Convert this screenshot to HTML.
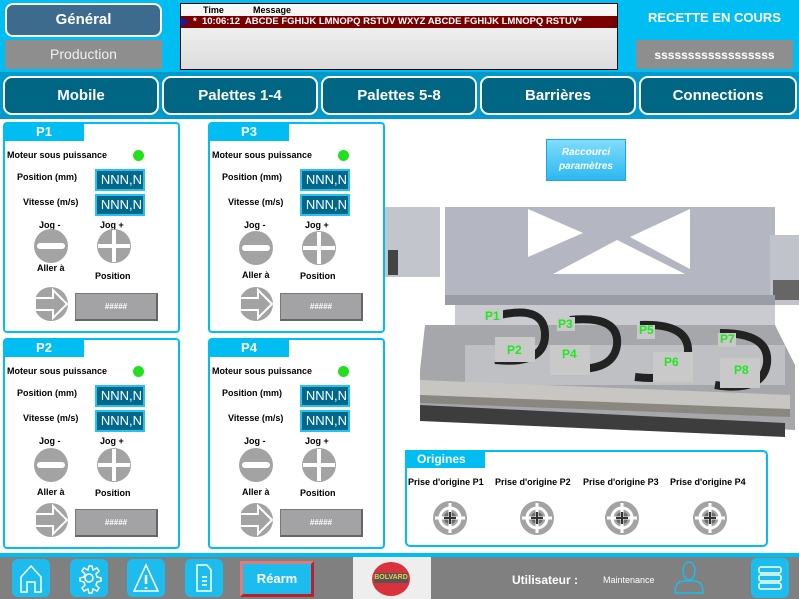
<!DOCTYPE html>
<html><head><meta charset="utf-8"><style>
*{margin:0;padding:0;box-sizing:border-box}
body{width:799px;height:599px;overflow:hidden;background:#fff;font-family:"Liberation Sans",Arial,sans-serif;position:relative}
.a{position:absolute}
.hdr{left:0;top:0;width:799px;height:72px;background:#00bdf2}
.nav{left:0;top:72px;width:799px;height:47px;background:#0099cc}
.nb{position:absolute;top:76px;height:39px;background:#006684;border:2px solid #fff;border-radius:9px;color:#fff;font-weight:bold;font-size:15px;text-align:center;line-height:35px}
.pan{position:absolute;width:177px;height:211px;border:2px solid #00bdf2;border-radius:4px;background:#fff}
.tab{position:absolute;left:-1px;top:-1px;width:80px;height:18px;background:#00bdf2;color:#fff;font-weight:bold;font-size:13px;text-align:center;line-height:18px}
.t{position:absolute;font-weight:bold;font-size:9px;color:#000;white-space:nowrap}
.f{position:absolute;left:90px;width:50px;height:22px;background:#00688b;border:2px solid #27c0ef;color:#fff;font-size:13px;text-align:right;padding-right:1px;line-height:18px}
.dot{position:absolute;left:128px;top:26px;width:11px;height:11px;border-radius:50%;background:#22e01e}
.btn{position:absolute;left:70px;top:169px;width:83px;height:28px;background:#a3a3a6;border:1px solid #777;border-right:2px solid #666;border-bottom:2px solid #666;color:#fff;font-size:8px;text-align:center;line-height:25px;font-weight:bold}
.ib{position:absolute;top:559px;width:38px;height:38px;background:#1cbcee;border-radius:6px}
</style></head><body>
<div class="a hdr"></div>
<div class="a" style="left:5px;top:3px;width:157px;height:34px;background:#3d6b8e;border:2px solid #fff;border-radius:8px;color:#fff;font-weight:bold;font-size:15px;text-align:center;line-height:30px">Général</div>
<div class="a" style="left:5px;top:40px;width:157px;height:29px;background:#8e8e8e;color:#f0f0f0;font-size:14px;text-align:center;line-height:29px">Production</div>
<div class="a" style="left:180px;top:3px;width:438px;height:67px;border:1px solid #000;background:linear-gradient(#fafafa,#dcdcdc)"></div>
<div class="a" style="left:203px;top:5px;font-size:9px;font-weight:bold">Time</div>
<div class="a" style="left:253px;top:5px;font-size:9px;font-weight:bold">Message</div>
<div class="a" style="left:181px;top:16px;width:436px;height:12px;background:#7a0000"></div>
<div class="a" style="left:181px;top:17px;width:0;height:0;border-top:5px solid transparent;border-bottom:5px solid transparent;border-left:8px solid #1a1aa0"></div>
<div class="a" style="left:193px;top:16px;color:#fff;font-size:9.5px;font-weight:bold;line-height:12px;white-space:nowrap">*&nbsp; 10:06:12&nbsp; ABCDE FGHIJK LMNOPQ RSTUV WXYZ ABCDE FGHIJK LMNOPQ RSTUV*</div>
<div class="a" style="left:636px;top:10px;width:157px;text-align:center;color:#fff;font-weight:bold;font-size:13px">RECETTE EN COURS</div>
<div class="a" style="left:636px;top:40px;width:157px;height:29px;background:#8e8e8e;color:#fff;font-weight:bold;font-size:12px;text-align:center;line-height:31px">ssssssssssssssssss</div>
<div class="a nav"></div>
<div class="nb" style="left:3px;width:156px">Mobile</div>
<div class="nb" style="left:162px;width:156px">Palettes 1-4</div>
<div class="nb" style="left:321px;width:156px">Palettes 5-8</div>
<div class="nb" style="left:480px;width:156px">Barrières</div>
<div class="nb" style="left:639px;width:158px">Connections</div>

<svg width="0" height="0" style="position:absolute"><defs>
<g id="minus"><circle r="17" fill="#a3a3a3"/><rect x="-14" y="-3" width="28" height="6" rx="3" fill="#fff"/></g>
<g id="plus"><circle r="17" fill="#a3a3a3"/><rect x="-16" y="-2" width="32" height="4" fill="#fff"/><rect x="-2" y="-16" width="4" height="32" fill="#fff"/></g>
<g id="arr"><circle r="17" fill="#a3a3a3"/><path d="M-16,-6 H2 V-14 L16,0 L2,14 V6 H-16 Z" fill="#a3a3a3" stroke="#fff" stroke-width="2"/></g>
<g id="tgt"><circle r="17" fill="#a3a3a3"/><circle r="10" fill="none" stroke="#fff" stroke-width="3"/><circle r="6" fill="#6a6a6a"/><rect x="-15" y="-1.5" width="30" height="3" fill="#fff"/><rect x="-1.5" y="-15" width="3" height="30" fill="#fff"/><rect x="-6" y="-1" width="12" height="2" fill="#333"/><rect x="-1" y="-6" width="2" height="12" fill="#333"/></g>
</defs></svg>

<div class="pan" style="left:3px;top:122px">
<div class="tab">P1</div>
<div class="t" style="left:2px;top:26px">Moteur sous puissance</div><div class="dot"></div>
<div class="t" style="left:12px;top:48px">Position (mm)</div><div class="f" style="top:45px">NNN,N</div>
<div class="t" style="left:18px;top:73px">Vitesse (m/s)</div><div class="f" style="top:70px">NNN,N</div>
<div class="t" style="left:34px;top:96px">Jog -</div><div class="t" style="left:95px;top:96px">Jog +</div>
<div class="t" style="left:32px;top:139px">Aller à</div><div class="t" style="left:90px;top:147px">Position</div>
<svg class="a" style="left:0;top:0" width="175" height="209"><use href="#minus" x="46" y="122"/><use href="#plus" x="109" y="122"/><use href="#arr" x="46" y="180"/></svg>
<div class="btn">#####</div>
</div>
<div class="pan" style="left:3px;top:338px">
<div class="tab">P2</div>
<div class="t" style="left:2px;top:26px">Moteur sous puissance</div><div class="dot"></div>
<div class="t" style="left:12px;top:48px">Position (mm)</div><div class="f" style="top:45px">NNN,N</div>
<div class="t" style="left:18px;top:73px">Vitesse (m/s)</div><div class="f" style="top:70px">NNN,N</div>
<div class="t" style="left:34px;top:96px">Jog -</div><div class="t" style="left:95px;top:96px">Jog +</div>
<div class="t" style="left:32px;top:147px">Aller à</div><div class="t" style="left:90px;top:148px">Position</div>
<svg class="a" style="left:0;top:0" width="175" height="209"><use href="#minus" x="46" y="125"/><use href="#plus" x="109" y="125"/><use href="#arr" x="46" y="180"/></svg>
<div class="btn">#####</div>
</div>
<div class="pan" style="left:208px;top:122px">
<div class="tab">P3</div>
<div class="t" style="left:2px;top:26px">Moteur sous puissance</div><div class="dot"></div>
<div class="t" style="left:12px;top:48px">Position (mm)</div><div class="f" style="top:45px">NNN,N</div>
<div class="t" style="left:18px;top:73px">Vitesse (m/s)</div><div class="f" style="top:70px">NNN,N</div>
<div class="t" style="left:34px;top:96px">Jog -</div><div class="t" style="left:95px;top:96px">Jog +</div>
<div class="t" style="left:32px;top:146px">Aller à</div><div class="t" style="left:90px;top:147px">Position</div>
<svg class="a" style="left:0;top:0" width="175" height="209"><use href="#minus" x="46" y="124"/><use href="#plus" x="109" y="124"/><use href="#arr" x="46" y="180"/></svg>
<div class="btn">#####</div>
</div>
<div class="pan" style="left:208px;top:338px">
<div class="tab">P4</div>
<div class="t" style="left:2px;top:26px">Moteur sous puissance</div><div class="dot"></div>
<div class="t" style="left:12px;top:48px">Position (mm)</div><div class="f" style="top:45px">NNN,N</div>
<div class="t" style="left:18px;top:73px">Vitesse (m/s)</div><div class="f" style="top:70px">NNN,N</div>
<div class="t" style="left:34px;top:96px">Jog -</div><div class="t" style="left:95px;top:96px">Jog +</div>
<div class="t" style="left:32px;top:147px">Aller à</div><div class="t" style="left:90px;top:148px">Position</div>
<svg class="a" style="left:0;top:0" width="175" height="209"><use href="#minus" x="46" y="125"/><use href="#plus" x="109" y="125"/><use href="#arr" x="46" y="180"/></svg>
<div class="btn">#####</div>
</div>

<div class="a" style="left:546px;top:139px;width:80px;height:42px;background:linear-gradient(#7fdcfb,#2cb8ef);border:1px solid #1ba8e0;color:#fff;font-style:italic;font-weight:bold;font-size:10px;text-align:center;line-height:14px;padding-top:6px">Raccourci<br>paramètres</div>

<!-- machine -->
<svg class="a" style="left:385px;top:195px" width="414" height="255">
<rect x="0" y="12" width="55" height="70" fill="#c3c5cc"/><rect x="3" y="55" width="10" height="25" fill="#444"/>
<rect x="60" y="12" width="330" height="98" fill="#b4b7c1"/>
<path d="M143,14 L143,62 L198,38 Z" fill="#fff"/>
<path d="M305,14 L305,74 L245,42 Z" fill="#fff"/>
<path d="M168,79 L300,79 L232,45 Z" fill="#fff"/>
<rect x="385" y="40" width="29" height="70" fill="#c0c3ca"/><rect x="388" y="85" width="26" height="20" fill="#666"/>
<rect x="60" y="100" width="330" height="10" fill="#9a9da6"/>
<rect x="70" y="110" width="320" height="30" fill="#c9cbd1"/>
<path d="M40,130 L390,130 L410,170 L410,235 L35,215 L35,175 Z" fill="#a6a7ab"/>
<rect x="80" y="150" width="320" height="40" fill="#bfc0c4"/>
<path d="M35,185 L405,200 L405,215 L35,200 Z" fill="#c7c6c2"/>
<path d="M35,210 L400,228 L400,242 L35,226 Z" fill="#3d3d3d"/>
<path d="M35,200 L405,214 L405,222 L35,208 Z" fill="#8a8781"/>
<g fill="none" stroke="#222" stroke-width="8">
<path d="M115,120 Q160,110 160,140 Q160,170 110,165"/>
<path d="M185,125 Q235,120 232,150 Q228,180 175,172"/>
<path d="M255,130 Q305,128 303,158 Q300,188 250,182"/>
<path d="M335,138 Q385,138 382,168 Q378,198 330,190"/>
</g>
<g fill="#c9c9c9"><rect x="100" y="113" width="18" height="14"/><rect x="110" y="142" width="40" height="25"/><rect x="172" y="122" width="18" height="14"/><rect x="165" y="150" width="40" height="30"/><rect x="252" y="130" width="18" height="14"/><rect x="268" y="157" width="40" height="30"/><rect x="333" y="138" width="18" height="14"/><rect x="335" y="163" width="40" height="30"/></g>
<g fill="#1ee81e" font-weight="bold" font-size="12" font-family="Liberation Sans,sans-serif">
<text x="100" y="125">P1</text><text x="122" y="159">P2</text><text x="173" y="133">P3</text><text x="177" y="163">P4</text>
<text x="254" y="139">P5</text><text x="279" y="171">P6</text><text x="335" y="148">P7</text><text x="349" y="179">P8</text></g>
</svg>

<div class="a" style="left:405px;top:450px;width:363px;height:97px;border:2px solid #00bdf2;border-radius:5px;background:#fff"></div>
<div class="a" style="left:405px;top:450px;width:80px;height:18px;background:#00bdf2;color:#fff;font-weight:bold;font-size:12px;line-height:18px;padding-left:12px">Origines</div>
<div class="t" style="left:408px;top:477px">Prise d'origine P1</div>
<div class="t" style="left:495px;top:477px">Prise d'origine P2</div>
<div class="t" style="left:583px;top:477px">Prise d'origine P3</div>
<div class="t" style="left:670px;top:477px">Prise d'origine P4</div>
<svg class="a" style="left:400px;top:495px" width="370" height="45"><use href="#tgt" x="50" y="23"/><use href="#tgt" x="137" y="23"/><use href="#tgt" x="222" y="23"/><use href="#tgt" x="310" y="23"/></svg>

<div class="a" style="left:0;top:553px;width:799px;height:4px;background:#00bdf2"></div>
<div class="a" style="left:0;top:557px;width:799px;height:42px;background:#808080"></div>
<div class="ib" style="left:12px"></div><div class="ib" style="left:70px"></div><div class="ib" style="left:127px"></div><div class="ib" style="left:185px"></div>
<svg class="a" style="left:0;top:557px" width="240" height="42" fill="none" stroke="#fff" stroke-width="1.5">
<path d="M21,35 V20 L31,9 L41,20 V35 H35 V25 H27 V35 Z"/>
<circle cx="89" cy="21" r="4"/><path d="M89,9 l3,0 l1,4 l4,-2 l2,3 l-3,3 l1,3 l4,1 v3 l-4,1 l-1,3 l3,3 l-2,3 l-4,-2 l-1,4 h-3 l-1,-4 l-4,2 l-2,-3 l3,-3 l-1,-3 l-4,-1 v-3 l4,-1 l1,-3 l-3,-3 l2,-3 l4,2 Z"/>
<path d="M146,8 L158,34 H134 Z"/><path d="M146,18 V27 M146,30 V32" stroke-width="2.5"/>
<path d="M197,8 H207 L211,13 V34 H197 Z M202,20 H207 M202,24 H207 M202,28 H207"/>
</svg>
<div class="a" style="left:240px;top:561px;width:74px;height:36px;background:#1cbcee;border:3px solid #c01f2a;border-top-color:#e27a7a;border-left-color:#e27a7a;color:#fff;font-weight:bold;font-size:13px;text-align:center;line-height:30px">Réarm</div>
<div class="a" style="left:353px;top:557px;width:78px;height:42px;background:#eeeeee"></div>
<div class="a" style="left:372px;top:562px;width:38px;height:34px;border-radius:50%;background:#d9323c"></div>
<div class="a" style="left:374px;top:573px;width:34px;height:10px;background:#555;color:#f3c94a;font-size:7px;font-weight:bold;text-align:center;line-height:10px">BOLVARD</div>
<div class="a" style="left:512px;top:573px;color:#fff;font-weight:bold;font-size:12px">Utilisateur :</div>
<div class="a" style="left:603px;top:575px;color:#fff;font-size:9px">Maintenance</div>
<svg class="a" style="left:672px;top:560px" width="34" height="36" fill="none" stroke="#1cbcee" stroke-width="1.5"><ellipse cx="17" cy="11" rx="6" ry="9"/><path d="M3,33 Q3,21 12,21 H22 Q31,21 31,33 Z"/></svg>
<div class="ib" style="left:751px;top:558px;height:40px"></div>
<svg class="a" style="left:751px;top:558px" width="38" height="40" fill="none" stroke="#fff" stroke-width="1.5"><rect x="8" y="9" width="22" height="6" rx="2"/><rect x="8" y="17" width="22" height="6" rx="2"/><rect x="8" y="25" width="22" height="6" rx="2"/></svg>
</body></html>
